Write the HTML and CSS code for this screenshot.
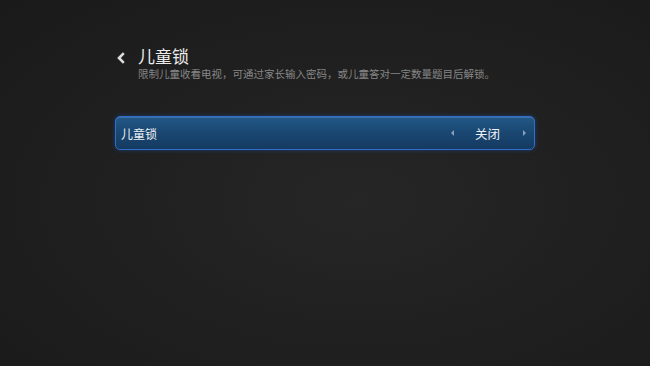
FILE: index.html
```html
<html>

<head>
    <title>儿童锁</title>
    <link rel="stylesheet" href="styles.css">
</head>

<body class="body">
    <div class="page">
        <div class="header">
            <svg class="backIcon" width="10" height="12" viewBox="0 0 10 12">
                <path d="M7.8 1.2 L3 6 L7.8 10.8" fill="none" stroke="#dcdcdc" stroke-width="2.6" />
            </svg>
            <div class="headerText">
                <div class="title">儿童锁</div>
                <div class="subTitle">限制儿童收看电视，可通过家长输入密码，或儿童答对一定数量题目后解锁。</div>
            </div>
        </div>
        <div class="optionRow">
            <div class="optionName">儿童锁</div>
            <div class="optionValue">
                <span class="arrowLeft"></span>
                <span class="valueText">关闭</span>
                <span class="arrowRight"></span>
            </div>
        </div>
    </div>
</body>

</html>
```

FILE: styles.css
```css
.body {
    margin: 0;
    width: 650px;
    height: 366px;
    overflow: hidden;
    background: radial-gradient(ellipse at 55% 55%, rgb(38, 38, 38) 0%, rgb(31, 31, 31) 55%, rgb(26, 26, 26) 100%);
    font-family: "Noto Sans CJK SC", "Noto Sans", sans-serif;
}

.page {
    padding-top: 46px;
    padding-left: 115px;
}

.header {
    display: flex;
    align-items: flex-start;
}

.backIcon {
    margin-top: 6px;
    margin-left: 1px;
    width: 10px;
    height: 12px;
}

.headerText {
    margin-left: 12px;
}

.title {
    font-size: 17px;
    line-height: 20px;
    color: rgb(235, 235, 235);
}

.subTitle {
    margin-top: 1px;
    font-size: 10.5px;
    line-height: 14px;
    color: rgb(135, 135, 135);
}

.optionRow {
    margin-top: 35px;
    width: 420px;
    height: 34px;
    box-sizing: border-box;
    border: 1px solid rgb(48, 110, 200);
    border-radius: 5px;
    background: linear-gradient(rgb(34, 88, 135) 0%, rgb(26, 72, 115) 45%, rgb(20, 58, 98) 100%);
    box-shadow: 0 0 4px rgba(30, 80, 170, 0.6), inset 0 1px 0 rgba(110, 160, 220, 0.35);
    display: flex;
    align-items: center;
    justify-content: space-between;
    padding-left: 5px;
    padding-right: 8px;
}

.optionName {
    font-size: 12px;
    color: rgb(236, 240, 245);
}

.optionValue {
    display: flex;
    align-items: center;
}

.valueText {
    font-size: 12.5px;
    color: rgb(236, 240, 245);
    margin-left: 21px;
    margin-right: 23px;
}

.arrowLeft {
    width: 0;
    height: 0;
    border-top: 3px solid transparent;
    border-bottom: 3px solid transparent;
    border-right: 3px solid rgb(140, 160, 185);
}

.arrowRight {
    width: 0;
    height: 0;
    border-top: 3px solid transparent;
    border-bottom: 3px solid transparent;
    border-left: 3px solid rgb(140, 160, 185);
}
```
